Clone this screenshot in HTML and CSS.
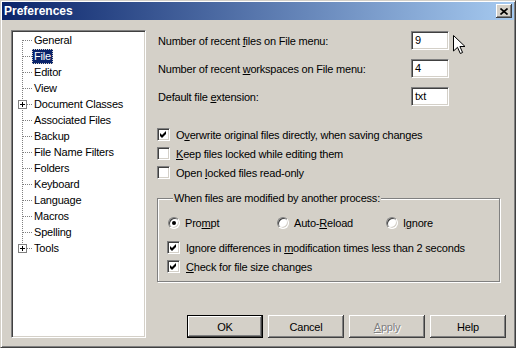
FILE: index.html
```html
<!DOCTYPE html>
<html>
  <head>
    <meta charset="UTF-8" />
    <title>Preferences</title>
    <link rel="stylesheet" href="styles.css">
  </head>
  <body>
    <div class="window">
      <div class="titlebar">
        <span class="title">Preferences</span>
        <span class="close-btn">
          <svg width="8" height="7" viewBox="0 0 8 7"><path d="M0.5 0.5 L7.5 6.5 M7.5 0.5 L0.5 6.5" stroke="#000" stroke-width="1.6" fill="none"/></svg>
        </span>
      </div>

      <div class="dialog">
        <div class="tree">
          <ul class="tree-list">
            <li class="node first"><span class="twig"></span><span class="label">General</span></li>
            <li class="node"><span class="twig"></span><span class="label selected">File</span></li>
            <li class="node"><span class="twig"></span><span class="label">Editor</span></li>
            <li class="node"><span class="twig"></span><span class="label">View</span></li>
            <li class="node"><span class="twig"><svg class="plus" width="9" height="9" viewBox="0 0 9 9"><rect x="0.5" y="0.5" width="8" height="8" fill="#fff" stroke="#808080"/><path d="M2 4.5 H7 M4.5 2 V7" stroke="#000"/></svg></span><span class="label">Document Classes</span></li>
            <li class="node"><span class="twig"></span><span class="label">Associated Files</span></li>
            <li class="node"><span class="twig"></span><span class="label">Backup</span></li>
            <li class="node"><span class="twig"></span><span class="label">File Name Filters</span></li>
            <li class="node"><span class="twig"></span><span class="label">Folders</span></li>
            <li class="node"><span class="twig"></span><span class="label">Keyboard</span></li>
            <li class="node"><span class="twig"></span><span class="label">Language</span></li>
            <li class="node"><span class="twig"></span><span class="label">Macros</span></li>
            <li class="node"><span class="twig"></span><span class="label">Spelling</span></li>
            <li class="node last"><span class="twig"><svg class="plus" width="9" height="9" viewBox="0 0 9 9"><rect x="0.5" y="0.5" width="8" height="8" fill="#fff" stroke="#808080"/><path d="M2 4.5 H7 M4.5 2 V7" stroke="#000"/></svg></span><span class="label">Tools</span></li>
          </ul>
        </div>

        <div class="pane">
          <div class="field">
            <span class="field-label">Number of recent <u>f</u>iles on File menu:</span>
            <span class="edit">9</span>
          </div>
          <div class="field">
            <span class="field-label">Number of recent <u>w</u>orkspaces on File menu:</span>
            <span class="edit">4</span>
          </div>
          <div class="field">
            <span class="field-label">Default file <u>e</u>xtension:</span>
            <span class="edit">txt</span>
          </div>

          <div class="checks">
            <div class="check"><span class="box"><svg width="9" height="9" viewBox="0 0 9 9"><polygon points="1,3 3,5 7,1 7,4 3,8 1,6" fill="#000"/></svg></span><span>O<u>v</u>erwrite original files directly, when saving changes</span></div>
            <div class="check"><span class="box"></span><span><u>K</u>eep files locked while editing them</span></div>
            <div class="check"><span class="box"></span><span>Open <u>l</u>ocked files read-only</span></div>
          </div>

          <fieldset class="group">
            <legend>When files are modified by another process:</legend>
            <div class="radios">
              <div class="radio-opt"><span class="radio on"></span><span>Pro<u>m</u>pt</span></div>
              <div class="radio-opt"><span class="radio"></span><span>Auto-<u>R</u>eload</span></div>
              <div class="radio-opt"><span class="radio"></span><span>I<u>g</u>nore</span></div>
            </div>
            <div class="check"><span class="box"><svg width="9" height="9" viewBox="0 0 9 9"><polygon points="1,3 3,5 7,1 7,4 3,8 1,6" fill="#000"/></svg></span><span>Ignore differences in <u>m</u>odification times less than 2 seconds</span></div>
            <div class="check"><span class="box"><svg width="9" height="9" viewBox="0 0 9 9"><polygon points="1,3 3,5 7,1 7,4 3,8 1,6" fill="#000"/></svg></span><span><u>C</u>heck for file size changes</span></div>
          </fieldset>

          <div class="buttons">
            <span class="btn default">OK</span>
            <span class="btn">Cancel</span>
            <span class="btn disabled"><u>A</u>pply</span>
            <span class="btn">Help</span>
          </div>
        </div>
      </div>

      <svg class="cursor" width="13" height="20" viewBox="0 0 13 20"><path d="M0.5 0.5 L0.5 16 L4.5 12.3 L7.3 18.5 L9.6 17.5 L6.9 11.5 L12 11.5 Z" fill="#fff" stroke="#000" stroke-width="1" stroke-linejoin="miter"/></svg>
    </div>
  </body>
</html>
```

FILE: styles.css
```css
body {
  margin: 0;
  background: #d4d0c8;
}

.window {
  position: relative;
  width: 516px;
  height: 348px;
  box-sizing: border-box;
  padding: 1px;
  border: 1px solid;
  border-color: #d4d0c8 #404040 #404040 #d4d0c8;
  box-shadow: inset 1px 1px #fff, inset -1px -1px #808080;
  background: #d4d0c8;
  font-family: "Liberation Sans", Arial, sans-serif;
  font-size: 11px;
  letter-spacing: -0.2px;
  color: #000;
  display: flex;
  flex-direction: column;
}

.titlebar {
  height: 18px;
  display: flex;
  align-items: center;
  justify-content: space-between;
  padding: 0 2px 0 2px;
  background: linear-gradient(to right, #0a246a, #a6caf0);
}

.title {
  color: #fff;
  font-weight: bold;
  font-size: 12px;
  letter-spacing: 0;
}

.close-btn {
  width: 16px;
  height: 14px;
  box-sizing: border-box;
  display: flex;
  align-items: center;
  justify-content: center;
  background: #d4d0c8;
  box-shadow: inset -1px -1px #404040, inset 1px 1px #fff, inset -2px -2px #808080;
}

.dialog {
  flex: 1;
  display: flex;
  gap: 11px;
  padding: 10px 8px 8px 9px;
}

/* tree view */
.tree {
  width: 135px;
  box-sizing: border-box;
  background: #fff;
  border: 1px solid;
  border-color: #808080 #fff #fff #808080;
  box-shadow: inset 1px 1px #404040, inset -1px -1px #d4d0c8;
  padding: 1px 0 0 2px;
}

.tree-list {
  list-style: none;
  margin: 0;
  padding: 0;
}

.node {
  height: 16px;
  display: flex;
  align-items: center;
}

.twig {
  width: 18px;
  height: 16px;
  box-sizing: border-box;
  padding-left: 4px;
  display: flex;
  align-items: center;
  background:
    repeating-linear-gradient(to right, #808080 0 1px, transparent 1px 2px) 9px 8px / 10px 1px no-repeat,
    repeating-linear-gradient(to bottom, #808080 0 1px, transparent 1px 2px) 8px 0 / 1px 16px no-repeat;
}

.first .twig {
  background:
    repeating-linear-gradient(to right, #808080 0 1px, transparent 1px 2px) 9px 8px / 10px 1px no-repeat,
    repeating-linear-gradient(to bottom, #808080 0 1px, transparent 1px 2px) 8px 8px / 1px 8px no-repeat;
}

.last .twig {
  background:
    repeating-linear-gradient(to right, #808080 0 1px, transparent 1px 2px) 9px 8px / 10px 1px no-repeat,
    repeating-linear-gradient(to bottom, #808080 0 1px, transparent 1px 2px) 8px 0 / 1px 8px no-repeat;
}

.plus {
  display: block;
}

.label {
  padding: 0 2px;
  line-height: 15px;
  white-space: nowrap;
}

.label.selected {
  background: #0a246a;
  color: #fff;
  outline: 1px dotted #d4d0c8;
  outline-offset: -1px;
}

/* right side */
.pane {
  flex: 1;
  display: flex;
  flex-direction: column;
  padding-top: 1px;
}

.field {
  height: 19px;
  display: flex;
  align-items: center;
}

.field + .field {
  margin-top: 9px;
}

.field:last-of-type {
  margin-top: 8px;
}

.field-label {
  width: 253px;
  padding-left: 1px;
}

.edit {
  width: 38px;
  height: 19px;
  box-sizing: border-box;
  background: #fff;
  border: 1px solid;
  border-color: #808080 #fff #fff #808080;
  box-shadow: inset 1px 1px #404040, inset -1px -1px #d4d0c8;
  padding: 0 3px;
  line-height: 17px;
}

u {
  text-underline-offset: 1px;
}

.checks {
  margin-top: 19px;
}

.check {
  height: 19px;
  display: flex;
  align-items: center;
  gap: 6px;
  white-space: nowrap;
}

.box {
  width: 13px;
  height: 13px;
  box-sizing: border-box;
  flex-shrink: 0;
  background: #fff;
  border: 1px solid;
  border-color: #808080 #fff #fff #808080;
  box-shadow: inset 1px 1px #404040, inset -1px -1px #d4d0c8;
  padding: 1px;
}

.box svg {
  display: block;
}

.group {
  width: 343px;
  box-sizing: border-box;
  margin: 10px 0 0 0;
  padding: 8px 4px 5px 9px;
  border: 1px solid #808080;
  box-shadow: inset 1px 1px #fff, 1px 1px #fff;
  min-width: 0;
}

.group legend {
  padding: 0 1px;
  margin-left: 6px;
  line-height: 13px;
  background: #d4d0c8;
}

.radios {
  display: flex;
  height: 19px;
  margin-bottom: 6px;
}

.radio-opt {
  width: 109px;
  display: flex;
  align-items: center;
  gap: 5px;
  padding-left: 1px;
  box-sizing: border-box;
}

.radio {
  width: 12px;
  height: 12px;
  box-sizing: border-box;
  border-radius: 50%;
  background: #fff;
  border: 1px solid;
  border-color: #808080 #fff #fff #808080;
  box-shadow: inset 1px 1px #404040, inset -1px -1px #d4d0c8;
  display: flex;
  align-items: center;
  justify-content: center;
}

.radio.on::after {
  content: "";
  width: 4px;
  height: 4px;
  border-radius: 50%;
  background: #000;
}

.buttons {
  margin-top: auto;
  display: flex;
  justify-content: flex-end;
  gap: 5px;
}

.btn {
  width: 76px;
  height: 23px;
  box-sizing: border-box;
  display: flex;
  align-items: center;
  justify-content: center;
  box-shadow: inset -1px -1px #404040, inset 1px 1px #fff, inset -2px -2px #808080;
}

.btn.default {
  border: 1px solid #000;
}

.btn.disabled {
  color: #808080;
  text-shadow: 1px 1px #fff;
}

.cursor {
  position: absolute;
  left: 452px;
  top: 34px;
}
```
